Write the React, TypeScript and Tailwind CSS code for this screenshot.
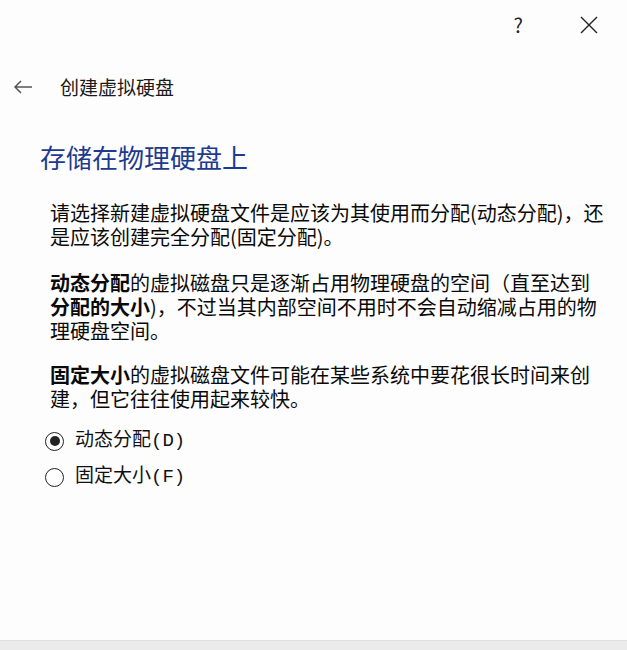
import React from "react";

const sans = { fontFamily: '"Noto Sans CJK SC", "Noto Sans", sans-serif' };
const mono = { fontFamily: '"Liberation Mono", "Noto Sans CJK SC", monospace' };

function Radio({ checked, label }: { checked: boolean; label: string }) {
  return (
    <div className="flex items-center h-[36px]">
      <div className="w-[19px] h-[19px] rounded-full border-[1.5px] border-[#222] flex items-center justify-center bg-white">
        {checked && <div className="w-[10px] h-[10px] rounded-full bg-[#222]" />}
      </div>
      <span className="ml-[11px] text-[19px] text-[#111] leading-[24px]" style={mono}>
        {label}
      </span>
    </div>
  );
}

export default function App() {
  return (
    <div className="w-[627px] h-[650px] bg-[#fdfdfd] flex flex-col text-[#0a0a0a]" style={sans}>
      <div className="h-[50px] flex items-center justify-end pr-[28px] shrink-0">
        <span className="text-[20px] text-[#222] leading-none mr-[56px]">?</span>
        <svg width="20" height="20" viewBox="0 0 20 20" fill="none" stroke="#222" strokeWidth="1.4">
          <path d="M2 2L18 18M18 2L2 18" />
        </svg>
      </div>
      <div className="flex items-center h-[26px] mt-[24px] shrink-0">
        <svg className="ml-[13px]" width="20" height="16" viewBox="0 0 20 16" fill="none" stroke="#555" strokeWidth="1.5">
          <path d="M19 8H2M8 2L2 8L8 14" />
        </svg>
        <span className="ml-[27px] text-[19px] text-[#1a1a1a] leading-[26px]">创建虚拟硬盘</span>
      </div>
      <h1 className="ml-[40px] mt-[40px] text-[26px] leading-[34px] text-[#1d3a8f] font-normal">存储在物理硬盘上</h1>
      <div className="ml-[50px] w-[560px] text-[20px] leading-[24px] mt-[27px]">
        <p>请选择新建虚拟硬盘文件是应该为其使用而分配(动态分配)，还是应该创建完全分配(固定分配)。</p>
        <p className="mt-[22px]">
          <b className="font-bold">动态分配</b>的虚拟磁盘只是逐渐占用物理硬盘的空间（直至达到
          <br />
          <b className="font-bold">分配的大小</b>)，不过当其内部空间不用时不会自动缩减占用的物理硬盘空间。
        </p>
        <p className="mt-[20px]">
          <b className="font-bold">固定大小</b>的虚拟磁盘文件可能在某些系统中要花很长时间来创建，但它往往使用起来较快。
        </p>
      </div>
      <div className="ml-[45px] mt-[12px] flex flex-col">
        <Radio checked label="动态分配(D)" />
        <Radio checked={false} label="固定大小(F)" />
      </div>
      <div className="flex-1" />
      <div className="h-[10px] bg-[#ebebeb] border-t border-[#e0e0e0] shrink-0" />
    </div>
  );
}
